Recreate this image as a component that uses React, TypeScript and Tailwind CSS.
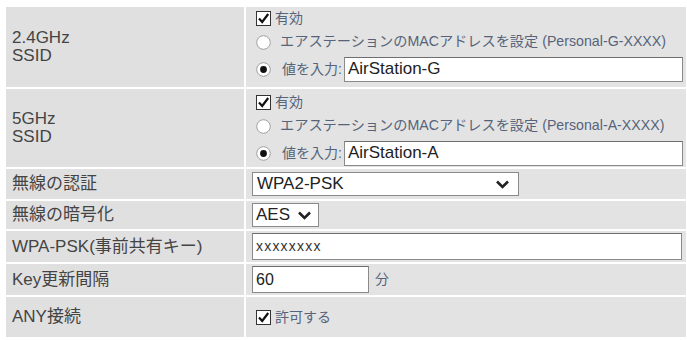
import { ReactNode } from 'react'

const font = { fontFamily: '"Liberation Sans", Arial, "Noto Sans CJK JP", sans-serif' }

function CheckBox() {
  return (
    <svg width="15" height="15" viewBox="0 0 15 15" className="shrink-0">
      <rect x="0.5" y="0.5" width="14" height="14" fill="#fff" stroke="#333" />
      <path d="M3 7.5 L6.2 11 L12.2 3" fill="none" stroke="#111" strokeWidth="2.2" />
    </svg>
  )
}

function Radio({ checked }: { checked?: boolean }) {
  return (
    <svg width="15" height="15" viewBox="0 0 15 15" className="shrink-0">
      <circle cx="7.5" cy="7.5" r="6.8" fill="#fff" stroke="#a0a0a0" />
      {checked && <circle cx="7.5" cy="7.5" r="3.4" fill="#111" />}
    </svg>
  )
}

function Chevron() {
  return (
    <svg width="15" height="10" viewBox="0 0 15 10">
      <path d="M2 2.5 L7.5 8 L13 2.5" fill="none" stroke="#222" strokeWidth="2.6" />
    </svg>
  )
}

function Row({ label, h, children, pt = '' }: { label: ReactNode; h: string; children: ReactNode; pt?: string }) {
  return (
    <div className={`grid grid-cols-[238px_1fr] gap-[2px] ${h}`}>
      <div className="bg-[#e0e0e0] flex items-center pl-[6px] text-[17px] leading-[18px] text-[#444]">{label}</div>
      <div className={`bg-[#e3e3e3] ${pt}`}>{children}</div>
    </div>
  )
}

function SsidBlock({ band, ssid }: { band: string; ssid: string }) {
  return (
    <div className="flex flex-col pl-[10px]">
      <div className="h-[22px] flex items-center gap-[4px] text-[14px] text-[#56637a]">
        <CheckBox />
        <span>有効</span>
      </div>
      <div className="h-[26px] flex items-center gap-[9px] text-[14.2px] text-[#56637a]">
        <Radio />
        <span>エアステーションのMACアドレスを設定 (Personal-{band}-XXXX)</span>
      </div>
      <div className="h-[28px] flex items-center text-[14px] text-[#56637a]">
        <Radio checked />
        <span className="ml-[11px]">値を入力:</span>
        <div className="ml-[2px] w-[339px] h-[25px] bg-white border border-[#8a8a8a] border-t-[#6e6e6e] flex items-center pl-[3px] text-[17px] text-[#222]">
          {ssid}
        </div>
      </div>
    </div>
  )
}

export default function App() {
  return (
    <main className="w-[687px] h-[340px] bg-white pt-[7px] pl-[6px] pr-[1px] overflow-hidden" style={font}>
      <div className="flex flex-col gap-[2px]">
        <Row label={<span>2.4GHz<br />SSID</span>} h="h-[80px]">
          <SsidBlock band="G" ssid="AirStation-G" />
        </Row>
        <Row label={<span>5GHz<br />SSID</span>} h="h-[78px]" pt="pt-[2px]">
          <SsidBlock band="A" ssid="AirStation-A" />
        </Row>
        <Row label="無線の認証" h="h-[30px]">
          <div className="h-full flex items-center pl-[6px]">
            <div className="w-[267px] h-[24px] bg-white border border-[#8a8a8a] flex items-center justify-between pl-[4px] pr-[8px] text-[17px] text-[#222]">
              <span>WPA2-PSK</span>
              <Chevron />
            </div>
          </div>
        </Row>
        <Row label="無線の暗号化" h="h-[28px]">
          <div className="h-full flex items-center pl-[6px]">
            <div className="w-[67px] h-[24px] bg-white border border-[#8a8a8a] flex items-center justify-between pl-[3px] pr-[6px] text-[17px] text-[#222]">
              <span>AES</span>
              <Chevron />
            </div>
          </div>
        </Row>
        <Row label="WPA-PSK(事前共有キー)" h="h-[31px]">
          <div className="h-full flex items-center pl-[6px]">
            <div className="w-[430px] h-[27px] bg-white border border-[#8a8a8a] border-t-[#6e6e6e] flex items-center pl-[3px] text-[14px] text-[#333] tracking-[1.2px]">
              xxxxxxxx
            </div>
          </div>
        </Row>
        <Row label="Key更新間隔" h="h-[31px]">
          <div className="h-full flex items-center gap-[6px] pl-[6px]">
            <div className="w-[117px] h-[27px] bg-white border border-[#8a8a8a] border-t-[#6e6e6e] flex items-center pl-[3px] text-[16px] text-[#222]">
              60
            </div>
            <span className="text-[14px] text-[#56637a]">分</span>
          </div>
        </Row>
        <Row label="ANY接続" h="h-[40px]">
          <div className="h-full flex items-center gap-[4px] pl-[10px] text-[14px] text-[#56637a]">
            <CheckBox />
            <span>許可する</span>
          </div>
        </Row>
      </div>
    </main>
  )
}
